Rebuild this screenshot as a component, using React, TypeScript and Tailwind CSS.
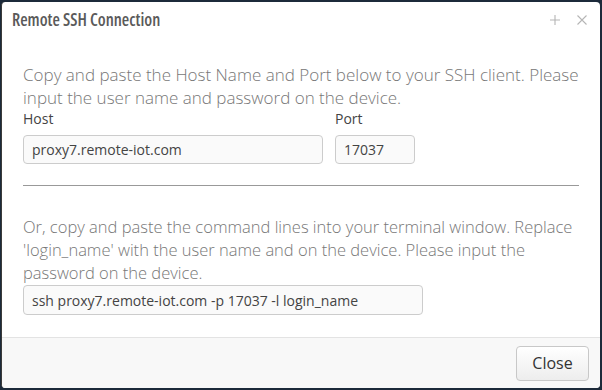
import React from 'react';

const App: React.FC = () => {
  return (
    <div className="w-[602px] h-[390px] bg-[#1c2a3a] pt-[2px] pl-[1px] pr-[2px] pb-[2px] font-['Open_Sans',sans-serif]">
      <div className="h-full flex flex-col bg-white rounded-[4px] overflow-hidden border-l border-[#3a3a3a]">
        {/* Header */}
        <div className="h-[36px] flex items-center justify-between pl-[10px] pr-[12px]">
          <h3 className="text-[17px] font-semibold font-stretch-[86%] text-[#5a5a5a]">Remote SSH Connection</h3>
          <div className="flex items-center gap-[15px] text-[#b5b5b5]">
            <svg width="12" height="12" viewBox="0 0 12 12" stroke="currentColor" strokeWidth="1.1">
              <path d="M6 1v10M1 6h10" />
            </svg>
            <svg width="12" height="12" viewBox="0 0 12 12" stroke="currentColor" strokeWidth="1.1">
              <path d="M1.5 1.5l9 9M10.5 1.5l-9 9" />
            </svg>
          </div>
        </div>

        {/* Body */}
        <div className="flex-1 px-[21px] pt-[25px]">
          <p className="text-[17px] font-light leading-[23px] text-[#777]">
            Copy and paste the Host Name and Port below to your SSH client. Please input the user name and password on the device.
          </p>
          <div className="flex gap-[12px]">
            <div className="flex flex-col">
              <label className="text-[14px] leading-[20px] text-[#444] mb-[6px]">Host</label>
              <input
                readOnly
                value="proxy7.remote-iot.com"
                className="w-[300px] h-[29px] px-[8px] text-[14px] text-[#444] bg-[#fafafa] border border-[#ccc] rounded-[4px] outline-none"
              />
            </div>
            <div className="flex flex-col">
              <label className="text-[14px] leading-[20px] text-[#444] mb-[6px]">Port</label>
              <input
                readOnly
                value="17037"
                className="w-[80px] h-[29px] px-[8px] text-[14px] text-[#444] bg-[#fafafa] border border-[#ccc] rounded-[4px] outline-none"
              />
            </div>
          </div>
          <hr className="w-[556px] mt-[21px] mb-[29px] border-t border-[#999]" />
          <p className="text-[16.5px] font-light leading-[23px] text-[#777]">
            Or, copy and paste the command lines into your terminal window. Replace 'login_name' with the user name and on the device. Please input the password on the device.
          </p>
          <input
            readOnly
            value="ssh proxy7.remote-iot.com -p 17037 -l login_name"
            className="mt-[1px] w-[400px] h-[30px] px-[8px] text-[14px] text-[#444] bg-[#fafafa] border border-[#ccc] rounded-[4px] outline-none"
          />
        </div>

        {/* Footer */}
        <div className="h-[51px] flex items-center justify-end px-[11px] bg-[#f8f8f8] border-t border-[#e3e3e3]">
          <button className="w-[73px] h-[35px] text-[16px] text-[#333] rounded-[4px] border border-[#c8c8c8] bg-gradient-to-b from-white to-[#ededed]">
            Close
          </button>
        </div>
      </div>
    </div>
  );
};

export default App;
